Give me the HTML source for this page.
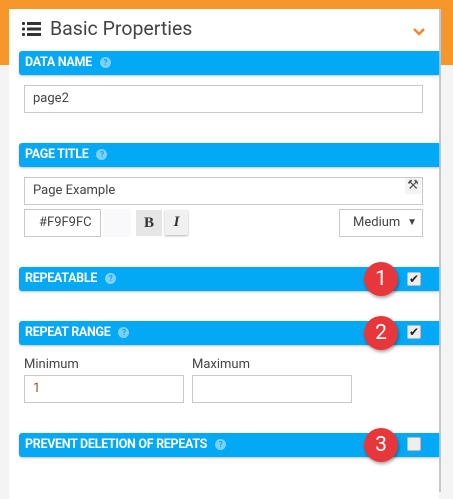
<!DOCTYPE html>
<html><head><style>
body{margin:0;width:453px;height:492px;background:#f4f4f4;position:relative;overflow:hidden;font-family:"Roboto","Liberation Sans",sans-serif;}
.top{position:absolute;left:0;top:0;width:453px;height:65px;background:#f7962b}
.panel{position:absolute;left:9px;top:9px;width:430px;height:490px;background:#fff}
.sb{position:absolute;left:439px;top:9px;width:2px;height:483px;background:#c8c8c8}
.abs{position:absolute}
.bar{position:absolute;left:19px;width:420px;height:24px;background:#03a9f4;border-radius:3px 0 0 3px;box-shadow:0 1px 2px rgba(0,0,0,.25);color:#fff;font-weight:bold;font-size:12.5px;line-height:24px;text-indent:6px;letter-spacing:-0.3px}
.q{display:inline-block;width:11px;height:11px;border-radius:50%;background:#7fd0f8;color:#03a9f4;font-size:8px;line-height:11px;text-align:center;text-indent:0;vertical-align:1px;margin-left:8px}
.inp{position:absolute;border:1px solid #c8c8c8;background:#fff;font-size:13px;color:#444;box-sizing:border-box;line-height:26px;padding-left:8px}
.badge{position:absolute;width:34px;height:34px;border-radius:50%;background:#e8373a;color:#fff;font-size:21px;text-align:center;line-height:34px;box-shadow:1px 2px 3px rgba(0,0,0,.35)}
.cb{position:absolute;left:407px;width:14px;height:14px;background:#eee;border:1px solid #bbb;border-radius:2px;box-sizing:border-box;font-size:12px;line-height:12px;text-align:center;color:#222}
.lbl{position:absolute;font-size:13px;color:#444}
</style></head><body>
<div class="top"></div>
<div class="panel"></div>
<div class="sb"></div>
<svg class="abs" style="left:22px;top:22px" width="19" height="14" viewBox="0 0 19 14"><g fill="#333"><rect x="0" y="0" width="3" height="3" rx="1"/><rect x="0" y="5.5" width="3" height="3" rx="1"/><rect x="0" y="11" width="3" height="3" rx="1"/><rect x="5" y="0" width="14" height="3"/><rect x="5" y="5.5" width="14" height="3"/><rect x="5" y="11" width="14" height="3"/></g></svg>
<div class="abs" style="left:50px;top:17px;font-size:19.5px;color:#444">Basic Properties</div>
<svg class="abs" style="left:413px;top:28px" width="12" height="8" viewBox="0 0 12 8"><path d="M1 1L6 6L11 1" stroke="#f7862b" stroke-width="2.5" fill="none"/></svg>

<div class="bar" style="top:51px">DATA NAME<span class="q">?</span></div>
<div class="inp" style="left:24px;top:85px;width:399px;height:28px">page2</div>

<div class="bar" style="top:143px">PAGE TITLE<span class="q">?</span></div>
<div class="inp" style="left:24px;top:177px;width:399px;height:28px">Page Example</div>
<div class="abs" style="left:405px;top:178px;width:16px;height:16px;background:#f4f4f4;color:#555;font-size:13px;line-height:16px;text-align:center">&#9874;</div>
<div class="inp" style="left:24px;top:209px;width:77px;height:28px;padding-left:14px">#F9F9FC</div>
<div class="abs" style="left:103px;top:209px;width:28px;height:28px;background:#f9f9fc"></div>
<div class="abs" style="left:136px;top:210px;width:26px;height:26px;background:#e6e6e6;font:bold 15px 'Liberation Serif',serif;color:#333;text-align:center;line-height:26px">B</div>
<div class="abs" style="left:165px;top:210px;width:23px;height:25px;background:#f0f0f0;box-shadow:0 1px 2px rgba(0,0,0,.3);font:italic bold 15px 'Liberation Serif',serif;color:#333;text-align:center;line-height:25px">I</div>
<div class="inp" style="left:339px;top:209px;width:84px;height:28px;padding-left:13px">Medium<span style="position:absolute;right:5px;font-size:10px">&#9660;</span></div>

<div class="bar" style="top:267px">REPEATABLE<span class="q">?</span></div>
<div class="badge" style="left:364px;top:262px">1</div>
<div class="cb" style="top:272px">&#10004;</div>

<div class="bar" style="top:321px">REPEAT RANGE<span class="q">?</span></div>
<div class="badge" style="left:364px;top:316px">2</div>
<div class="cb" style="top:325px">&#10004;</div>
<div class="lbl" style="left:24px;top:357px">Minimum</div>
<div class="lbl" style="left:192px;top:357px">Maximum</div>
<div class="inp" style="left:24px;top:375px;width:160px;height:28px;color:#8a5a3a">1</div>
<div class="inp" style="left:192px;top:375px;width:160px;height:28px"></div>

<div class="bar" style="top:433px">PREVENT DELETION OF REPEATS<span class="q">?</span></div>
<div class="badge" style="left:364px;top:428px">3</div>
<div class="cb" style="top:437px"></div>
</body></html>
